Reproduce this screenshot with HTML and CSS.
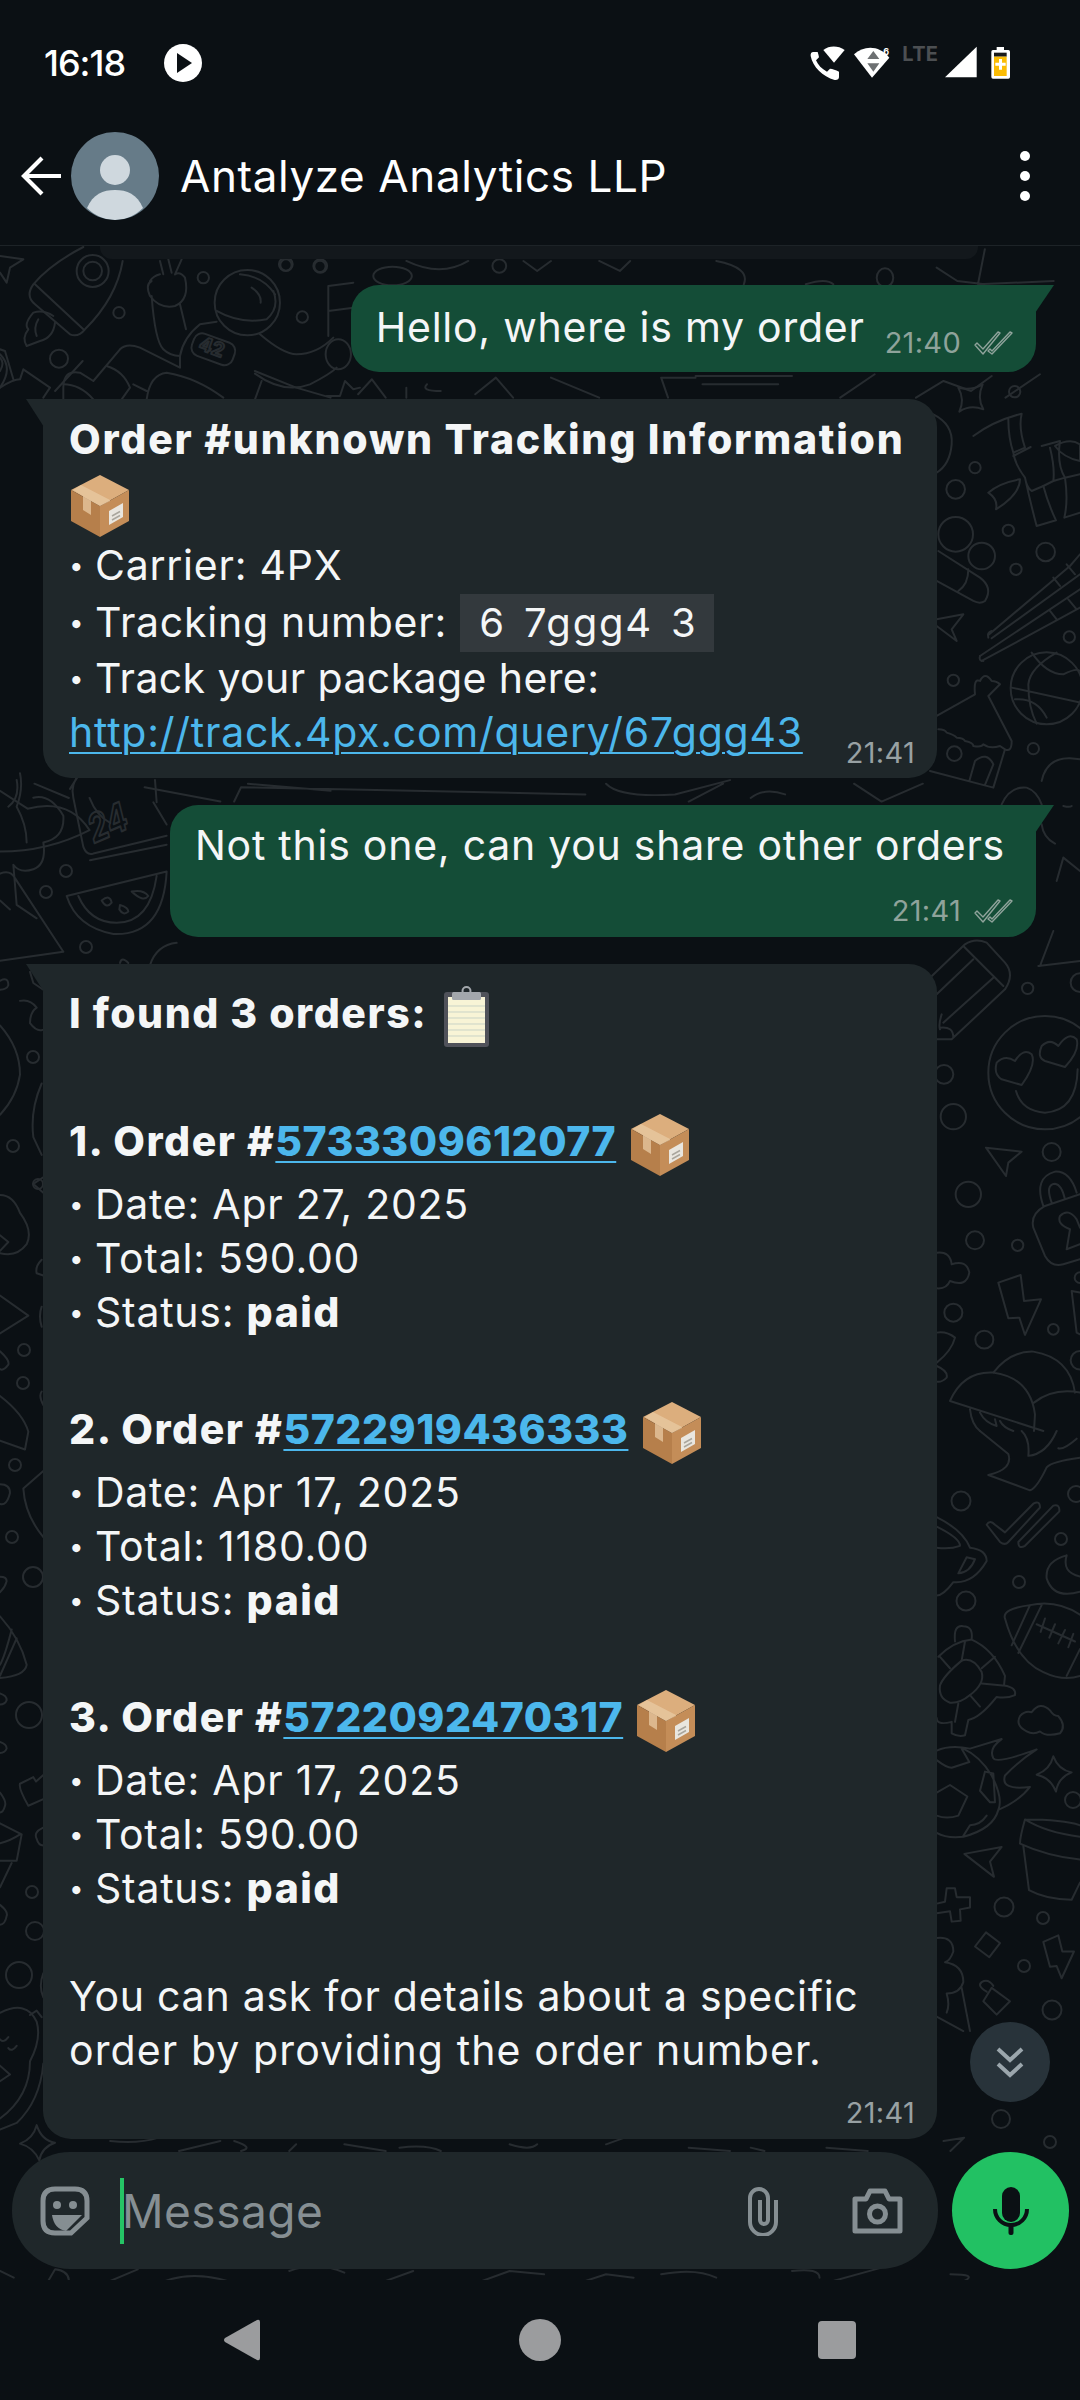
FILE: index.html
```html
<!DOCTYPE html>
<html lang="en">
<head>
<meta charset="utf-8">
<title>Antalyze Analytics LLP</title>
<link rel="stylesheet" href="styles.css">
</head>
<body>
<svg class="defs" width="0" height="0" aria-hidden="true">
  <defs>
    <symbol id="box" viewBox="0 0 58 62">
      <polygon points="29,0 58,15 29,31 0,15" fill="#dcae7d"/>
      <polygon points="0,15 29,31 29,62 0,46" fill="#b67f4b"/>
      <polygon points="29,31 58,15 58,46 29,62" fill="#c48d58"/>
      <polygon points="10,10 39,25 39,26 29,31 20,26 20,40 12,35 12,21 2,15" fill="#e8c9a3" opacity=".75"/>
      <polygon points="38,36 52,28 52,42 38,50" fill="#e9e6df"/>
      <path d="M41 41l8-4.500M41 45l8-4.500" stroke="#a9a69d" stroke-width="1.500"/>
    </symbol>
    <symbol id="dticks" viewBox="0 0 40 24">
      <path d="M1 14l2-2 6 6L24 1l2 1L9 23zM14 20l2-2 2 2L36 1l2 1L18 23z" fill="none" stroke="currentColor" stroke-width="1.400" stroke-linejoin="round"/>
    </symbol>
  </defs>
</svg>
<div class="phone">
  <header class="status">
    <div class="status-left">
      <span class="clock">16:18</span>
      <svg class="play" viewBox="0 0 38 38"><circle cx="19" cy="19" r="19" fill="#fff"/><path d="M13 9l15 10-15 10z" fill="#0b1014"/></svg>
    </div>
    <svg class="status-icons" viewBox="0 0 780 210">
      <path d="M100 96c-6 0-9 5-8 12 6 32 36 62 72 72 8 1 13-3 13-9v-16c-10-6-19-8-27-9l-9 9c-16-8-27-20-33-34l9-9c-1-7-3-12-4-16z" fill="#fff"/>
      <path d="M130 90c18-14 44-14 64 0l-32 38z" fill="#fff"/>
      <path d="M222 103c30-28 76-28 106 10l-52 60z" fill="#fff"/>
      <path d="M280 93l-18 24h36zM280 155l-18-25h36z" fill="#6d7072"/>
      <text class="si-six" x="310" y="106">6</text>
      <text class="si-lte" x="367" y="124">LTE</text>
      <path d="M495 172L590 80v92z" fill="#fff"/>
      <path d="M650 90v-9h22v9h13a5 5 0 0 1 5 5v76a5 5 0 0 1-5 5h-46a5 5 0 0 1-5-5V95a5 5 0 0 1 5-5z" fill="#fff"/>
      <rect x="642" y="98" width="38" height="12" fill="#1a1a1a"/>
      <rect x="642" y="110" width="38" height="58" fill="#fbbc04"/>
      <path d="M657 117h9v11h11v9h-11v12h-9v-12h-11v-9h11z" fill="#fff"/>
    </svg>
  </header>

  <header class="appbar">
    <svg class="back" viewBox="0 0 42 42"><path d="M40 21H3M21 3L3 21l18 18" fill="none" stroke="#fff" stroke-width="4.200"/></svg>
    <svg class="avatar" viewBox="0 0 88 88"><defs><clipPath id="avclip"><circle cx="44" cy="44" r="44"/></clipPath></defs><circle cx="44" cy="44" r="44" fill="#667b88"/><g clip-path="url(#avclip)"><circle cx="44" cy="38" r="15" fill="#cfd8de"/><path d="M16 76c6-14 16-18 28-18s22 4 28 18c-8 8-18 12-28 12s-20-4-28-12z" fill="#cfd8de"/></g></svg>
    <h1 class="title">Antalyze Analytics LLP</h1>
    <div class="kebab"><i></i><i></i><i></i></div>
  </header>

  <main class="chat">
    <svg class="doodles" viewBox="0 245 1080 2035" aria-hidden="true">
      <g transform="translate(0,240) scale(.3333)">
        <path d="M250 18Q150 70 100 130Q75 165 105 190L210 280Q235 290 255 265Q350 170 368 60M105 130L250 265"/>
        <circle cx="278" cy="90" r="48"/><circle cx="278" cy="90" r="28"/>
        <path d="M160 225Q130 205 100 215Q70 250 85 265Q65 290 80 315L120 300Q160 290 165 245M115 235Q100 260 110 285"/>
        <circle cx="357" cy="215" r="17"/><circle cx="177" cy="353" r="27"/><circle cx="610" cy="110" r="17"/><circle cx="858" cy="72" r="17"/><circle cx="960" cy="76" r="17"/><circle cx="907" cy="228" r="17"/>
        <path d="M455 165Q465 300 490 325Q510 345 540 345Q550 290 600 250L650 242M540 190L558 265M455 120Q435 130 450 165Q480 205 525 195Q570 175 555 110Q540 90 525 100L545 55M515 95L505 55M480 60L490 100M480 100Q460 105 450 120"/>
        <circle cx="742" cy="185" r="98"/>
        <path d="M650 210Q720 250 800 235Q840 200 820 150M720 100Q790 105 825 160M755 140Q785 160 782 185"/>
        <rect x="575" y="290" width="130" height="70" rx="26" transform="rotate(20 640 325)"/>
        <text class="dz-num" x="596" y="340" transform="rotate(20 640 325)">42</text>
        <path d="M190 475V440Q190 385 240 395L280 420L360 325Q380 305 420 320L540 380M540 345V380M780 280Q850 340 890 340Q950 340 1000 290M985 135L1060 125M985 135V285M985 210L1060 200"/>
        <ellipse cx="1015" cy="340" rx="38" ry="45"/>
        <path d="M765 398Q850 460 930 430Q990 400 1010 380M785 420L765 475M440 475Q450 400 500 395Q590 410 670 470M320 375Q370 390 390 440L365 475M400 430L440 450M190 430Q240 430 280 475"/>
        <path d="M0 440Q40 415 60 415L70 385L150 440L130 470M0 45L70 55L30 80L20 125L0 95M0 325L15 330L40 415M0 350Q15 365 0 390M980 465H1020L1035 420L1060 445L1080 440"/>
      </g>
      <g transform="scale(.6887,.3333)">
        <circle cx="570" cy="825" r="28"/><path d="M590 780Q640 830 680 780M760 780L780 810L800 780M870 780L900 810L915 780M1040 780Q1090 800 1080 850M1170 850Q1200 830 1210 850M1360 800L1390 840L1430 850M1430 745L1420 850L1530 840"/>
        <ellipse cx="725" cy="795" rx="10" ry="20"/><ellipse cx="415" cy="790" rx="10" ry="20"/><ellipse cx="465" cy="795" rx="10" ry="20"/><ellipse cx="1285" cy="830" rx="12" ry="28"/>
        <path d="M370 1110L430 1160L480 1190M0 1060Q20 1100 0 1160M80 1170L120 1080M520 1180L540 1135L560 1190M590 1160V1190M620 1150Q610 1170 640 1170M690 1180L720 1130L745 1190M800 1130L870 1190M970 1190L960 1130H1010M1010 1125H1150M1020 1150H1130M1220 1190L1270 1120M1330 1190L1370 1140L1410 1170L1440 1125M1460 1190L1510 1120"/>
      </g>
      <g transform="translate(0,390) scale(.6887,.357)">
        <path d="M0 1120L40 1170Q100 1140 130 1230Q70 1290 0 1290M50 1100L100 1140M360 1100L480 1120M130 1140Q140 1190 160 1210M210 1110L320 1150M340 1150L350 1110L850 1130M880 1100Q900 1140 980 1130L1060 1090M1050 1100L1000 1150M1090 1140Q1110 1110 1140 1130M1240 1100L1280 1150L1340 1100"/>
      </g>
      <g transform="translate(930,380) scale(.3333)">
        <path d="M85 20Q125 30 158 10Q140 50 160 85Q120 70 88 92Q105 55 85 20Z"/>
        <circle cx="254" cy="32" r="17"/><circle cx="135" cy="260" r="17"/><circle cx="77" cy="325" r="28"/><circle cx="77" cy="460" r="52"/><circle cx="155" cy="525" r="40"/><circle cx="235" cy="448" r="17"/><circle cx="347" cy="513" r="28"/><circle cx="258" cy="565" r="17"/><circle cx="418" cy="768" r="17"/><circle cx="70" cy="898" r="17"/><circle cx="310" cy="1103" r="17"/><circle cx="73" cy="1118" r="22"/>
        <path d="M10 100Q70 130 65 190Q60 250 20 275"/>
        <path d="M130 165Q190 120 275 98Q265 140 285 200L250 215Q255 250 285 290Q290 320 305 330L340 315M235 115Q235 170 250 215M250 225L302 198M285 290Q300 360 320 435L378 418Q355 370 340 315M175 335Q210 305 270 295Q270 340 198 385Q205 355 175 335Z"/>
        <path d="M335 195L390 180Q380 250 405 290L450 280M360 200Q375 260 370 300L405 290Q415 360 403 410L450 395M375 195Q420 170 450 190L450 240Q400 230 375 195ZM370 300L340 315"/>
        <path d="M175 762L420 555L450 520M185 772L450 580M150 825L450 625M155 840L450 680M370 590L390 615M410 550L435 580M360 690L380 715M415 655L440 685"/>
        <path d="M175 770Q170 755 185 750M150 825Q145 840 160 840"/>
        <circle cx="350" cy="922" r="108"/>
        <path d="M245 920L450 965M305 815Q350 880 400 880Q440 860 450 870M380 815Q300 860 295 910Q295 980 320 1028M255 955Q320 950 350 1010"/>
        <path d="M20 1005L135 940Q130 890 150 900Q165 870 185 900Q200 900 210 910L175 945L245 1080Q245 1115 225 1105L190 1220L0 1170M25 1045Q45 1045 50 1055Q70 1060 80 1070Q100 1070 105 1080Q130 1085 130 1095Q155 1100 160 1090Q180 1105 210 1095L225 1105M118 1200L135 1140Q170 1110 190 1150L165 1212"/>
        <path d="M20 715L100 700L65 745L80 780L20 735"/>
        <path d="M25 510L150 590Q190 620 165 660Q150 670 130 660L20 600M115 565Q115 610 85 630"/>
        <path d="M215 1270Q240 1215 290 1220Q320 1230 335 1270M335 1200Q350 1130 420 1132L450 1135M400 1275Q420 1280 425 1275M335 1330Q340 1370 375 1388M400 1430L380 1500M400 1430L450 1470"/>
      </g>
      <g transform="translate(930,930) scale(.3333)">
        <path d="M0 140L105 40Q135 20 170 35L225 95Q255 130 225 175L65 325L20 325L0 320M100 45L220 165M130 85L20 190M190 140L40 275M30 290Q70 285 70 320M35 250Q25 280 30 295"/>
        <path d="M330 105L370 0M325 105L450 90"/>
        <circle cx="293" cy="172" r="17"/><circle cx="42" cy="430" r="28"/><circle cx="70" cy="557" r="38"/><circle cx="115" cy="790" r="38"/><circle cx="135" cy="928" r="27"/><circle cx="263" cy="943" r="17"/><circle cx="365" cy="663" r="27"/><circle cx="70" cy="1145" r="27"/><circle cx="163" cy="1226" r="27"/><circle cx="370" cy="1195" r="16"/><circle cx="450" cy="155" r="28"/><circle cx="450" cy="1040" r="16"/><circle cx="450" cy="1288" r="28"/>
        <circle cx="345" cy="425" r="170"/>
        <path d="M275 462Q320 400 305 370Q280 350 255 390Q225 370 200 395Q190 430 215 445ZM405 408Q450 360 440 325Q415 300 385 345Q360 320 335 345Q320 380 345 390ZM258 480Q275 540 345 545Q440 540 443 415"/>
        <path d="M168 650L275 662L235 695L228 735Z"/>
        <path d="M340 825Q310 740 375 722Q420 720 440 785M365 815Q345 760 375 758Q395 760 405 805M450 790L345 825Q300 850 310 890L345 975Q365 1010 400 1000L450 985M410 955L420 895Q380 880 390 855Q415 830 440 865L450 890M410 955L450 940"/>
        <path d="M205 1055L272 1032L282 1110L333 1105L285 1212L268 1160L235 1162Z"/>
        <path d="M20 965Q60 960 65 1000Q110 985 118 1025Q110 1070 60 1050Q50 1075 20 1072M20 1205Q50 1200 75 1220Q65 1260 20 1295M20 1305Q55 1320 50 1340Q35 1355 20 1352M425 1080L450 1085M425 1080L440 1205L450 1210"/>
        <path d="M60 1410Q100 1320 190 1325Q300 1340 315 1450L312 1500M60 1410L340 1500M190 1325Q240 1260 310 1262Q420 1280 435 1385M312 1415Q370 1370 450 1385M120 1435Q125 1480 150 1500M150 1445Q165 1475 200 1485L195 1465M210 1470Q220 1490 250 1500"/>
      </g>
      <g transform="translate(930,1430) scale(.3333,.3827)">
        <path d="M150 0L235 60Q250 100 175 115L300 155Q320 150 350 95Q365 80 450 70M275 0Q300 20 295 65Q350 60 380 0M385 45Q400 50 440 20"/>
        <path d="M170 245Q180 230 195 245L225 265L310 190Q330 180 330 200L235 290Q225 300 210 290ZM265 290L370 195Q390 190 388 210L285 300Q265 310 265 290Z"/>
        <path d="M410 325Q345 340 350 385Q370 440 450 420M410 325Q395 370 450 380"/>
        <path d="M225 490Q215 465 300 455Q380 440 450 480M225 490Q260 600 340 630Q400 655 450 640M300 455L245 560M335 455L265 580M410 640L450 570M320 505L435 550M345 490L332 525M375 505L358 540M405 520L385 555M430 530L415 565"/>
        <path d="M20 225Q100 260 120 305Q170 310 170 340Q130 400 70 395Q40 430 20 430M20 250Q90 280 90 300Q60 310 20 305M110 330L85 372Q120 370 135 335Z"/>
        <path d="M75 550Q70 505 100 510Q130 510 125 545Q190 570 225 640L222 665Q260 670 255 690Q230 700 200 695Q150 750 115 755L105 795Q85 800 65 790V760Q20 770 20 750M25 590Q70 550 125 545M30 590L60 620M105 550L95 600M195 590L155 620M155 660L218 665M120 690L150 720M85 712L75 760"/>
        <path d="M30 665Q40 640 95 600Q130 590 155 630Q165 660 120 690Q90 712 60 710Q25 700 30 665Z"/>
        <path d="M290 785Q255 770 270 745Q285 730 305 735Q330 705 360 730Q370 745 385 745Q410 770 390 790Q350 800 330 785Q310 795 290 785Z"/>
        <path d="M370 850Q385 885 425 892Q385 905 378 942Q360 905 320 898Q360 885 370 850Z"/>
        <path d="M20 835Q60 820 120 830L215 805Q175 830 190 855Q200 870 320 832Q270 860 225 900Q210 940 300 930Q270 965 205 990Q190 1040 100 1060Q50 1065 20 1050M100 830Q150 850 185 900Q220 960 205 990M20 860Q50 880 65 880Q100 870 118 865L95 830M20 945L60 925L112 955L85 1005Q50 1015 20 1005M165 890L190 895L195 970L180 970L150 940ZM100 1058L120 1030Q150 1030 170 1005"/>
        <path d="M285 1015Q400 1015 450 1030M285 1015Q270 1060 270 1078Q350 1110 450 1120M285 1015Q350 1050 450 1060M280 1085L297 1200Q350 1225 425 1225L450 1180"/>
        <path d="M103 1105L215 1087L180 1125L192 1165Z"/>
        <path d="M20 1235L45 1230L50 1195L75 1195L80 1218L120 1218L120 1245L90 1250L92 1280L65 1282L60 1255L20 1260"/>
        <path d="M168 1310L210 1338L178 1375L135 1347Z"/>
        <path d="M340 1335L385 1318L397 1360L432 1360L395 1430L380 1398L360 1400Z"/>
        <path d="M185 1455L240 1490L200 1525L160 1490ZM170 1465Q140 1450 155 1440Q175 1430 190 1450"/>
        <path d="M20 1325Q70 1320 70 1360Q60 1385 45 1388Q100 1395 100 1440Q90 1470 50 1470Q60 1500 50 1520M20 1530L100 1568M95 1455L120 1568"/>
      </g>
      <g transform="translate(0,770) scale(.3333,.4464)">
        <path d="M25 80Q60 60 50 20M60 5Q70 40 50 80Q80 120 80 160M100 60Q150 50 190 100Q195 150 130 160Q140 210 100 220Q60 230 40 210L50 300L110 330M0 230Q30 220 45 240L190 405L0 425M0 290L30 310"/>
        <path d="M210 40L240 5M240 5Q210 30 220 60L250 170Q260 190 280 185L500 145M270 200L500 165M465 20L470 70M460 70L500 120M480 10L300 5"/>
        <text class="dz-num dz-big" x="262" y="138" transform="rotate(-18 350 100)">24</text>
        <path d="M200 280L500 225Q490 370 340 365Q230 350 200 280M235 280Q270 340 350 340Q450 340 470 235"/>
        <path d="M305 290Q330 275 335 295Q320 310 305 290ZM360 300Q385 305 385 315Q370 325 358 310ZM395 270Q430 265 445 280Q430 295 395 270Z"/>
        <path d="M450 435Q470 390 530 385M360 430Q365 415 385 430M0 470Q25 460 25 480Q20 490 0 490M90 450L100 475L130 490M60 515Q90 510 110 530Q90 540 90 565Q110 585 128 580M0 570Q60 620 60 680Q50 730 0 770M125 700Q90 760 100 820L125 860M130 910L100 925L130 945M0 950Q40 950 60 990Q100 1030 80 1060Q50 1090 0 1080M0 1040L25 1055L0 1075M125 1095Q105 1110 110 1125L130 1130M0 1175L85 1220L0 1260M125 1200Q115 1220 125 1245M0 1300Q30 1320 25 1330Q10 1345 0 1340M125 1390Q115 1400 130 1420M0 1400Q70 1440 85 1480L75 1520L0 1500"/>
      </g>
      <g transform="translate(0,1470) scale(.3333,.4405)">
        <path d="M0 30Q30 30 30 50Q20 80 0 75M130 0L70 40Q75 100 130 150M0 240Q20 240 20 250Q15 265 0 275M0 330Q60 380 80 440Q75 465 0 470M35 360Q15 420 0 440M50 380L0 465M0 505Q20 510 20 520Q15 530 0 530M0 615Q20 620 20 630Q15 640 0 640M60 710L100 695L108 705L130 690M60 710Q55 720 85 760L130 745M0 730Q20 750 15 760Q10 775 0 775M0 800L65 825L50 885H0M0 845Q30 840 60 825M35 890L0 945M128 810Q100 820 110 835Q115 850 130 850M0 985Q25 1000 20 1010Q15 1030 0 1030"/>
        <path d="M0 1230Q80 1200 110 1250Q125 1290 90 1340Q90 1420 0 1470M130 1345Q120 1430 50 1480L0 1495M90 1235L110 1225L125 1240M0 1290Q10 1300 25 1285M25 1310Q35 1320 50 1305M0 1350L30 1370L0 1385M130 1140Q115 1170 130 1195"/>
        <path d="M110 1485Q125 1520 165 1525Q125 1535 118 1565Q100 1535 60 1527Q100 1515 110 1485Z"/>
      </g>
      <g transform="translate(0,2000) scale(.6887,.3333)">
        <path d="M160 420Q200 430 230 410M260 450L320 420M340 420Q370 440 350 450M430 430L420 450M500 430L560 450M580 440Q620 430 640 450M740 430Q770 450 780 430M880 430L920 400M1000 440L1060 450M1090 440L1110 450M1200 440L1260 450M1370 420L1400 410L1380 450"/>
        <path d="M70 840L80 805Q100 810 100 840M160 840L200 805M240 840Q280 810 330 840M420 810Q460 780 500 815M560 840L600 810M700 840L740 810L790 820M850 840L880 820L920 830M960 820Q1010 800 1040 830M1150 810Q1190 800 1190 830M1210 840L1280 800M1380 820Q1420 820 1400 840M0 810L20 830"/>
      </g>
      <circle cx="1001" cy="2118" r="9"/><circle cx="1050" cy="2141" r="6"/>
      <circle cx="961" cy="1500" r="9.500"/><circle cx="1061" cy="1538" r="6"/><circle cx="1019" cy="1581" r="6"/><circle cx="966" cy="1600" r="9.500"/><circle cx="1004" cy="1906" r="9.500"/><circle cx="1043" cy="1917" r="6"/><circle cx="1024" cy="1965" r="6"/><circle cx="1052" cy="2009" r="9.500"/><circle cx="1076" cy="1493" r="8"/><circle cx="1073" cy="1799" r="8"/>
      <circle cx="66" cy="870" r="6"/><circle cx="46" cy="891" r="6"/><circle cx="86" cy="946" r="6"/><circle cx="33" cy="1056" r="6"/><circle cx="13" cy="1145" r="6"/><circle cx="38" cy="1183" r="5"/><circle cx="24" cy="1349" r="6"/><circle cx="23" cy="1382" r="6"/><circle cx="15" cy="1464" r="6"/>
      <circle cx="12" cy="1536" r="6"/><circle cx="33" cy="1576" r="10"/><circle cx="29" cy="1714" r="13"/><circle cx="32" cy="1891" r="6"/><circle cx="35" cy="1930" r="9"/><circle cx="19" cy="1974" r="13"/>
    </svg>
    <div class="datepill"></div>

    <div class="thread">
      <article class="bubble out out-short">
        <p class="ln">Hello, where is my order</p>
        <div class="meta meta-inline"><span>21:40</span><svg class="ticks"><use href="#dticks"/></svg></div>
      </article>

      <article class="bubble in">
        <p class="ln"><b class="b-title">Order #unknown Tracking Information</b></p>
        <p class="ln ln-e"><svg class="emoji"><use href="#box"/></svg></p>
        <p class="ln"><span class="dot">•</span>Carrier: 4PX</p>
        <p class="ln ln-code"><span class="dot">•</span>Tracking number: <code class="code">6 7ggg4 3</code></p>
        <p class="ln ln-tight"><span class="dot">•</span>Track your package here:</p>
        <p class="ln"><a class="link" href="#">http://track.4px.com/query/67ggg43</a></p>
        <div class="meta meta-over"><span>21:41</span></div>
      </article>

      <article class="bubble out out-long">
        <p class="ln">Not this one, can you share other orders</p>
        <div class="meta meta-below"><span>21:41</span><svg class="ticks"><use href="#dticks"/></svg></div>
      </article>

      <article class="bubble in">
        <p class="ln ln-e"><b>I found 3 orders:</b> <svg class="emoji clip" viewBox="0 0 47 62"><rect x="1" y="6" width="45" height="55" rx="3" fill="#50525a"/><rect x="5" y="11" width="37" height="46" fill="#f8f4d6"/><path d="M5 20h37M5 26h37M5 32h37M5 38h37M5 44h37M5 50h37" stroke="#c9d3c6" stroke-width="1"/><rect x="9" y="6" width="29" height="8" rx="1.500" fill="#a3a7ac"/><circle cx="23.500" cy="5" r="4" fill="none" stroke="#a3a7ac" stroke-width="2"/></svg></p>
        <p class="ln ln-gap">&nbsp;</p>
        <p class="ln ln-e"><b>1. Order #<a class="link" href="#">5733309612077</a></b> <svg class="emoji"><use href="#box"/></svg></p>
        <p class="ln"><span class="dot">•</span>Date: Apr 27, 2025</p>
        <p class="ln"><span class="dot">•</span>Total: 590.00</p>
        <p class="ln"><span class="dot">•</span>Status: <b>paid</b></p>
        <p class="ln">&nbsp;</p>
        <p class="ln ln-e"><b>2. Order #<a class="link" href="#">5722919436333</a></b> <svg class="emoji"><use href="#box"/></svg></p>
        <p class="ln"><span class="dot">•</span>Date: Apr 17, 2025</p>
        <p class="ln"><span class="dot">•</span>Total: 1180.00</p>
        <p class="ln"><span class="dot">•</span>Status: <b>paid</b></p>
        <p class="ln">&nbsp;</p>
        <p class="ln ln-e"><b>3. Order #<a class="link" href="#">5722092470317</a></b> <svg class="emoji"><use href="#box"/></svg></p>
        <p class="ln"><span class="dot">•</span>Date: Apr 17, 2025</p>
        <p class="ln"><span class="dot">•</span>Total: 590.00</p>
        <p class="ln"><span class="dot">•</span>Status: <b>paid</b></p>
        <p class="ln">&nbsp;</p>
        <p class="ln">You can ask for details about a specific</p>
        <p class="ln ln-wide">order by providing the order number.</p>
        <div class="meta meta-end"><span>21:41</span></div>
      </article>
    </div>

    <button class="scroll-down" type="button" aria-label="Scroll down">
      <svg viewBox="0 0 28 32"><path d="M2 3l12 11L26 3M2 18l12 11 12-11" fill="none" stroke="#9ba6ac" stroke-width="4"/></svg>
    </button>

    <div class="composer">
      <div class="input">
        <svg class="ic-sticker" viewBox="0 0 50 50"><path d="M15 3h20q12 0 12 12v17L31 47H15Q3 47 3 35V15Q3 3 15 3z" fill="none" stroke="#858e92" stroke-width="5"/><circle cx="17" cy="19" r="4" fill="#858e92"/><circle cx="33" cy="19" r="4" fill="#858e92"/><path d="M12 29h30L26 45q-12-2-14-16z" fill="#858e92"/></svg>
        <span class="caret"></span>
        <span class="placeholder">Message</span>
        <svg class="ic-clip" viewBox="0 0 36 50"><path d="M31 14v22a13 13 0 0 1-26 0V12a9 9 0 0 1 18 0v22a4 4 0 0 1-8 0V14" fill="none" stroke="#858e92" stroke-width="4"/></svg>
        <svg class="ic-cam" viewBox="0 0 51 46"><path d="M3 11h11l4-8h15l4 8h11v32H3z" fill="none" stroke="#858e92" stroke-width="5" stroke-linejoin="round"/><circle cx="25.500" cy="26" r="8" fill="none" stroke="#858e92" stroke-width="5"/></svg>
      </div>
      <button class="mic" type="button" aria-label="Record">
        <svg viewBox="0 0 36 48"><rect x="9" y="0" width="18" height="35" rx="9" fill="#0b1014"/><path d="M2 22c0 9 7 16 16 16s16-7 16-16" fill="none" stroke="#0b1014" stroke-width="4"/><rect x="15.500" y="36" width="5" height="12" rx="2" fill="#0b1014"/></svg>
      </button>
    </div>
  </main>

  <nav class="navbar">
    <svg class="nav-back" viewBox="0 0 38 42"><path d="M34 1L2 19q-2 2 0 4l32 18q3 1 3-2V3q0-3-3-2z" fill="#9b9c9e"/></svg>
    <span class="nav-home"></span>
    <span class="nav-recent"></span>
  </nav>
</div>
</body>
</html>
```

FILE: styles.css
```css
* { box-sizing: border-box; }
html, body { margin: 0; padding: 0; background: #0b1014; }
body { font-family: "Inter", "Noto Sans", sans-serif; color: #f4f6f7; }
.defs { position: absolute; }
p, h1 { margin: 0; }

.phone { width: 1080px; height: 2400px; display: flex; flex-direction: column; background: #0b1014; overflow: hidden; }

.status { height: 106px; display: flex; align-items: flex-start; justify-content: space-between; padding: 20px 40px 0 44px; }
.status-left { display: flex; align-items: center; gap: 39px; height: 86px; }
.clock { font-size: 36px; font-weight: 500; letter-spacing: -1px; color: #fff; }
.play { width: 38px; height: 38px; }
.status-icons { width: 260px; height: 70px; }
.si-six { font: 700 27px "Inter", sans-serif; fill: #fff; }
.si-lte { font: 700 60px "Inter", sans-serif; fill: #4c4f52; letter-spacing: 1px; }

.appbar { height: 139px; padding: 0 0 0 21px; display: flex; align-items: center; }
.back { width: 42px; height: 42px; flex: none; }
.avatar { width: 88px; height: 88px; margin-left: 8px; flex: none; }
.title { font-size: 44px; font-weight: 400; margin-left: 21px; flex: 1; color: #fff; letter-spacing: .6px; }
.kebab { width: 10px; margin-right: 50px; display: flex; flex-direction: column; gap: 10px; }
.kebab i { display: block; width: 10px; height: 10px; border-radius: 50%; background: #fff; }

.chat { position: relative; height: 2035px; border-top: 1px solid #1d2327; display: flex; flex-direction: column; justify-content: space-between; overflow: hidden; }
.doodles { position: absolute; left: 0; top: 0; width: 1080px; height: 2035px; fill: none; stroke: #272c30; stroke-width: 2px; }
.doodles * { vector-effect: non-scaling-stroke; stroke-linecap: round; stroke-linejoin: round; }
.dz-num { font: 700 58px "Inter", sans-serif; stroke: #272c30; fill: none; }
.dz-big { font-size: 90px; }
.datepill { position: absolute; left: 100px; top: 0; width: 878px; height: 13px; background: #13181c; border-radius: 0 0 12px 12px; }

.thread { position: relative; display: flex; flex-direction: column; gap: 27px; padding: 39px 44px 0 43px; }

.bubble { position: relative; font-size: 41px; line-height: 54px; color: #f4f6f7; border-radius: 28px; padding: 13px 22px 8px 26px; }
.bubble b { font-weight: 800; letter-spacing: 1.500px; }
.bubble b.b-title { letter-spacing: 1.750px; }
.bubble b .link { letter-spacing: .5px; }
.in { width: 894px; background: #1f272a; border-top-left-radius: 0; }
.in::before { content: ""; position: absolute; left: -17px; top: 0; width: 18px; height: 28px; background: #1f272a; clip-path: polygon(0 0, 100% 0, 100% 100%); }
.out { align-self: flex-end; background: #144d37; border-top-right-radius: 0; padding-left: 25px; padding-right: 22px; }
.out::after { content: ""; position: absolute; right: -18px; top: 0; width: 19px; height: 28px; background: #144d37; clip-path: polygon(0 0, 100% 0, 0 100%); }
.out-short { display: flex; padding-top: 15px; padding-bottom: 18px; }
.out-long { padding-right: 31px; }

.ln { height: 54px; white-space: nowrap; letter-spacing: .75px; }
.ln-e { height: 72px; line-height: 72px; }
.ln-gap { height: 56px; }
.ln-code { height: 59px; line-height: 61px; }
.ln-tight { letter-spacing: .4px; }
.ln-wide { letter-spacing: 1.100px; }
.dot { display: inline-block; width: 26px; font-size: 26px; vertical-align: 5px; letter-spacing: 0; }
.emoji { width: 58px; height: 62px; vertical-align: middle; margin-left: 2px; }
.clip { width: 47px; margin-left: 4px; }
.code { display: inline-block; height: 58px; margin-top: 2px; padding: 0 16px 0 19px; margin-left: 1px; background: #33393d; font: 400 40px/58px "Inter", sans-serif; letter-spacing: 1.800px; word-spacing: 5px; vertical-align: top; }
.link { color: #4cb7ec; text-decoration: underline; text-decoration-thickness: 2px; text-underline-offset: 5px; }

.meta { display: flex; justify-content: flex-end; align-items: center; gap: 13px; height: 36px; font-size: 29px; line-height: 36px; color: #98a1a3; letter-spacing: .3px; }
.out .meta { color: #8fa39b; }
.ticks { width: 40px; height: 24px; color: #8fa39b; }
.meta-inline { margin-left: 20px; align-self: flex-end; margin-bottom: -7px; }
.meta-over { margin-top: -24px; margin-bottom: -1px; }
.meta-below { margin-top: 21px; margin-right: -9px; }
.meta-end { margin-top: 18px; }

.scroll-down { position: absolute; left: 970px; top: 1776px; width: 80px; height: 80px; border: 0; border-radius: 50%; background: #28333a; padding: 0; display: flex; align-items: center; justify-content: center; }
.scroll-down svg { width: 28px; height: 32px; }

.composer { position: relative; display: flex; align-items: center; gap: 14px; padding: 0 11px 11px 12px; }
.input { width: 926px; height: 117px; border-radius: 58px; background: #1f272a; display: flex; align-items: center; padding-left: 28px; position: relative; }
.ic-sticker { width: 50px; height: 50px; flex: none; margin-right: 30px; }
.caret { width: 4px; height: 66px; background: #25c465; flex: none; }
.placeholder { font-size: 46px; color: #868f93; flex: 1; margin-left: -2px; letter-spacing: .5px; }
.ic-clip { width: 36px; height: 50px; flex: none; margin-right: 71px; }
.ic-cam { width: 51px; height: 46px; flex: none; margin-right: 35px; }
.mic { width: 117px; height: 117px; border: 0; border-radius: 50%; background: #22c163; padding: 0; display: flex; align-items: center; justify-content: center; }
.mic svg { width: 36px; height: 48px; }

.navbar { height: 120px; display: flex; align-items: center; padding: 0 224px 0 223px; justify-content: space-between; }
.nav-back { width: 38px; height: 42px; }
.nav-home { width: 42px; height: 42px; border-radius: 50%; background: #9b9c9e; }
.nav-recent { width: 38px; height: 38px; border-radius: 4px; background: #9b9c9e; }
```
